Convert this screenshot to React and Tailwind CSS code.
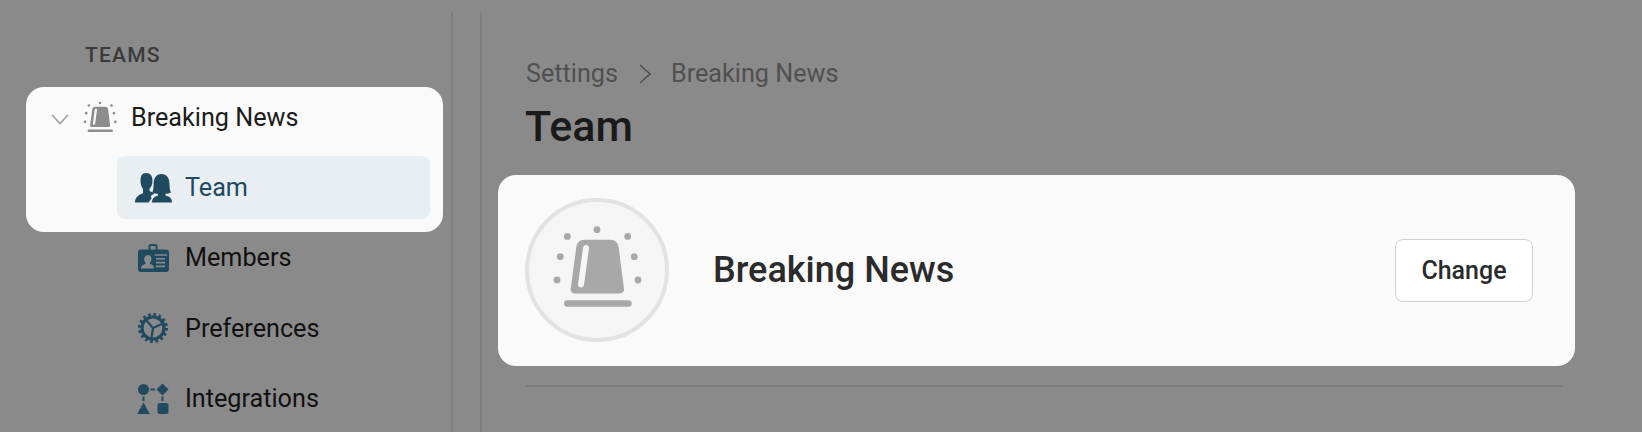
const font = { fontFamily: 'Roboto, sans-serif' };

function AlarmIcon({ className, fill, stripe, viewBox = '0 0 144 144' }) {
  const dots = [[72, 31.7], [42.3, 38.4], [102.7, 38.4], [35.3, 58.7], [109.3, 58.7], [32, 82], [113, 82]];
  return (
    <svg viewBox={viewBox} className={className}>
      {dots.map(([cx, cy]) => <circle key={cx} cx={cx} cy={cy} r="3.4" fill={fill} />)}
      <path d="M60 41.7H85C90 41.7 93 44.5 93.6 49L99 91C99.3 93.6 97.6 95.4 95 95.4H49.5C47 95.4 45.4 93.6 45.7 91L51.3 49C51.9 44.5 55 41.7 60 41.7Z" fill={fill} />
      <line x1="61" y1="50" x2="56" y2="86.5" stroke={stripe} strokeWidth="6" strokeLinecap="round" />
      <rect x="39" y="102.3" width="67.7" height="6.4" rx="3.2" fill={fill} />
    </svg>
  );
}

function TeamIcon() {
  return (
    <svg viewBox="0 0 37 30" className="w-[37px] h-[30px] shrink-0" fill="#1f4a60">
      <path d="M11 0C15.5 0 17.5 3 17.5 7.5C17.5 11 16.4 14 14.5 15.8V18L19.5 20.2L15.8 23L16.6 25.2L13.5 29.5H0C0 24.5 3 22.2 8 20.2V16C6.4 14 5.5 11 5.5 7.5C5.5 3 7 0 11 0Z" />
      <path d="M26.5 1C32 1 34.5 5.5 34.5 11C34.5 14.5 34.8 17.5 36 19.5C34.5 20.5 32.5 20.8 30.5 20.8V22.4C34.5 23.3 37 25.2 37 29.5H16.8C17.2 25.5 19 23.4 23 22.4V20.8C21 20.8 19 20.3 17.3 19.4C18.3 17.3 18.6 14.5 18.6 11C18.6 5.5 21 1 26.5 1Z" />
    </svg>
  );
}

function MembersIcon() {
  return (
    <svg viewBox="0 0 31 28" className="w-[31px] h-[28px]" fill="#1f4a60">
      <rect x="0" y="5.5" width="31" height="22.5" rx="3" />
      <rect x="11.5" y="1" width="7" height="8" rx="1.5" fill="none" stroke="#1f4a60" strokeWidth="2" />
      <path d="M10 11C12.4 11 13.4 12.8 13.4 15C13.4 16.6 12.8 18 12 18.8V20C14.5 20.7 16 21.6 16 24.5H3C3 21.6 5 20.7 7.5 20V18.8C6.7 18 6.2 16.6 6.2 15C6.2 12.8 7.6 11 10 11Z" fill="#8a8a8a" />
      <path d="M17 11H29M18 14.8H27M18 18.6H27M18 22.4H27" stroke="#8a8a8a" strokeWidth="1.6" />
    </svg>
  );
}

function GearIcon() {
  return (
    <svg viewBox="0 0 32 32" className="w-[32px] h-[32px]" fill="none" stroke="#1f4a60">
      <circle cx="16" cy="16" r="11" strokeWidth="3.2" />
      <circle cx="16" cy="16" r="13.5" strokeWidth="3" strokeDasharray="2.65 2.65" />
      <path d="M16 16L26 11.5M16 16L9 8M16 16L14.5 26" strokeWidth="2.2" />
    </svg>
  );
}

function IntegrationsIcon() {
  return (
    <svg viewBox="0 0 30 30" className="w-[30px] h-[30px] overflow-visible" fill="#1f4a60">
      <circle cx="5.5" cy="5.5" r="5.5" />
      <path d="M24.5 -0.5L30.5 5.5L24.5 11.5L18.5 5.5Z" />
      <path d="M5.5 18.5L11.8 30H-0.8Z" />
      <rect x="19.5" y="19" width="11" height="11" rx="2.5" />
      <path d="M12.5 5.5H17M5.5 12.5V17M24.5 12.5V17" stroke="#1f4a60" strokeWidth="2" fill="none" />
    </svg>
  );
}

const rows = [
  { label: 'Members', Icon: MembersIcon },
  { label: 'Preferences', Icon: GearIcon },
  { label: 'Integrations', Icon: IntegrationsIcon },
];

export default function App() {
  return (
    <div className="flex w-[1642px] h-[432px] overflow-hidden bg-[#8a8a8a] antialiased" style={font}>
      {/* sidebar */}
      <aside className="w-[453px] shrink-0 mt-[12px] pl-[26px] pr-[8px] border-r-2 border-[#7e7e7e]">
        <p className="ml-[59px] mt-[32px] h-[22px] leading-[22px] text-[21px] font-medium tracking-[1.2px] text-[#3a3a3a]">
          TEAMS
        </p>
        <div className="mt-[21px] h-[145px] rounded-[18px] bg-[#fafafa] pr-[13px]">
          <div className="flex items-center h-[61px] pl-[25px]">
            <svg viewBox="0 0 18 11" className="w-[18px] h-[11px] shrink-0 mt-[4px]" fill="none" stroke="#a3a3a3" strokeWidth="1.8">
              <path d="M1 1L9 9.5L17 1" />
            </svg>
            <AlarmIcon className="w-[36px] h-[34px] ml-[13px] -mt-[2px] shrink-0" fill="#8c8c8c" stripe="#fafafa" viewBox="24 24 96 90" />
            <span className="ml-[13px] text-[25.2px] leading-none text-[#1c1c1c]">Breaking News</span>
          </div>
          <div className="flex items-center gap-[13px] ml-[91px] mt-[8px] h-[63px] pl-[18px] rounded-[8px] bg-[#e9eef2]">
            <TeamIcon />
            <span className="pt-[1px] text-[25.2px] leading-none text-[#1f4a60]">Team</span>
          </div>
        </div>
        <ul className="flex flex-col gap-[20.25px] mt-[1px] pl-[111px]">
          {rows.map(({ label, Icon }) => (
            <li key={label} className="flex items-center h-[50px] text-[25.2px] leading-none text-[#111111]">
              <span className="flex justify-center w-[32px] mr-[16px]"><Icon /></span>
              {label}
            </li>
          ))}
        </ul>
      </aside>

      {/* main */}
      <main className="flex-1 ml-[27px] mt-[12px] pl-[44px] border-l-2 border-[#7e7e7e]">
        <nav className="flex items-center mt-[47px] h-[30px] text-[25.2px] leading-none text-[#505050]">
          <span>Settings</span>
          <svg viewBox="0 0 14 20" className="w-[14px] h-[20px] ml-[20px] mr-[19px]" fill="none" stroke="#505050" strokeWidth="1.6">
            <path d="M2 1L12 10L2 19" />
          </svg>
          <span>Breaking News</span>
        </nav>
        <h1 className="-ml-[1px] mt-[9px] h-[56px] leading-[56px] text-[43px] font-medium text-[#1a1a1a]">Team</h1>
        <section className="flex items-center -ml-[28px] mt-[21px] w-[1077px] h-[191px] rounded-[18px] bg-[#fafafa] pl-[27px] pr-[42px]">
          <div className="w-[144px] h-[144px] mb-[1px] shrink-0 rounded-full border-[4px] border-[#e2e2e2] bg-[#f5f5f5] overflow-hidden">
            <AlarmIcon className="w-[144px] h-[144px] -m-[4px]" fill="#a8a8a8" stripe="#f5f5f5" />
          </div>
          <h2 className="ml-[44px] mb-[2px] flex-1 text-[36px] font-medium leading-none text-[#2b2b2b]">Breaking News</h2>
          <button className="w-[138px] h-[63px] rounded-[8px] border border-[#d0d0d0] bg-white text-[25px] font-medium text-[#2b2b2b]">
            Change
          </button>
        </section>
        <hr className="mt-[19px] w-[1037px] border-t-2 border-[#7e7e7e]" />
      </main>
    </div>
  );
}
